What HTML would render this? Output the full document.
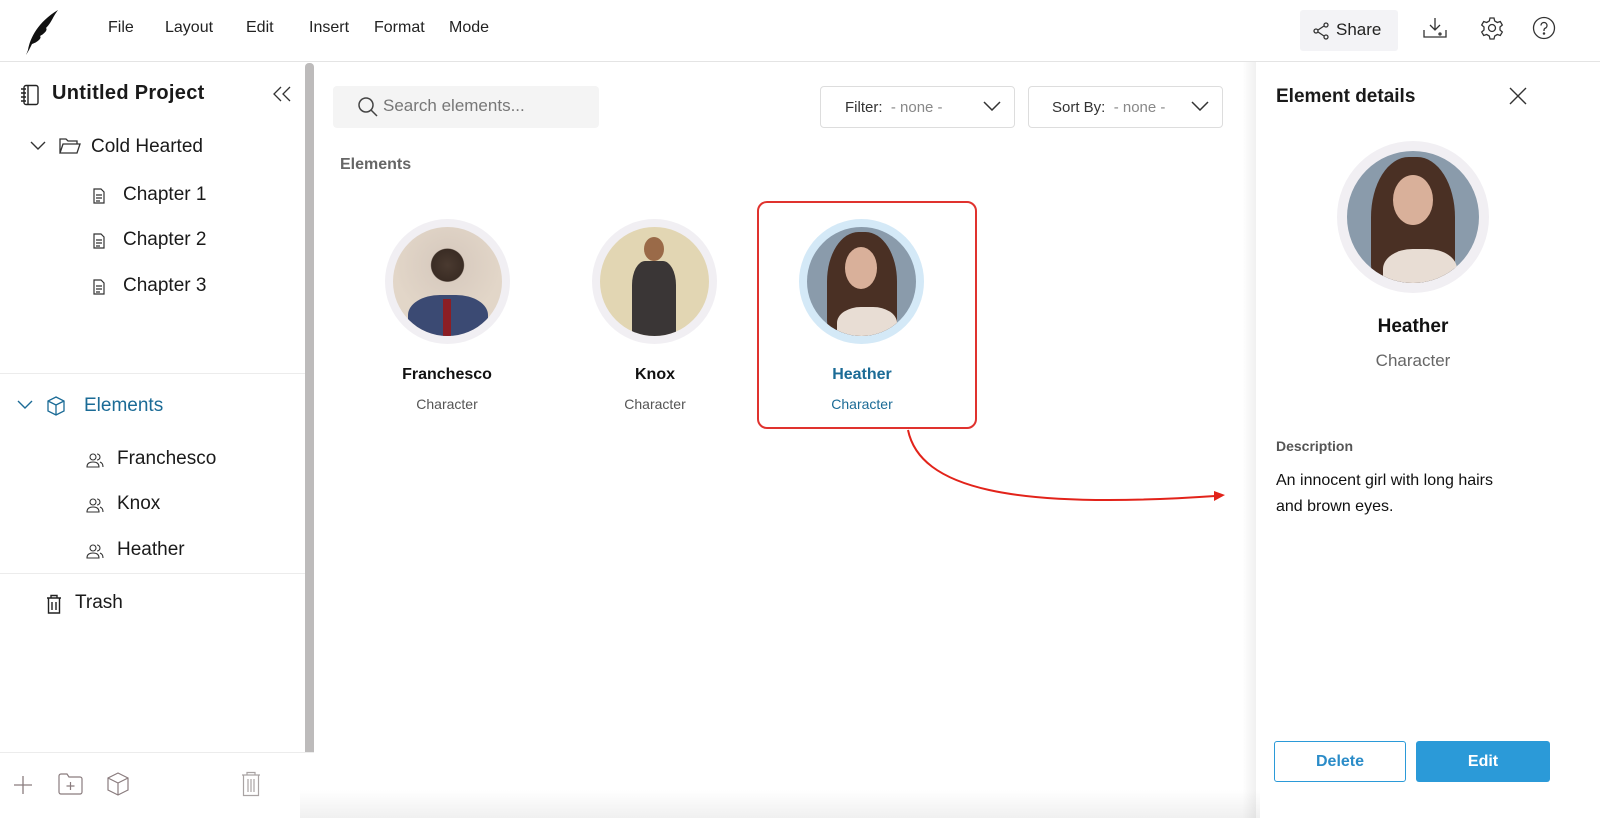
<!DOCTYPE html>
<html><head><meta charset="utf-8"><style>
*{box-sizing:border-box;margin:0;padding:0}
body{width:1600px;height:818px;overflow:hidden;background:#fff;font-family:"Liberation Sans",sans-serif;color:#111;position:relative}
.abs{position:absolute}
.menu span{position:absolute;top:19px;font-size:16px;color:#222}
.side{font-size:19px;color:#1a1a1a}
svg{position:absolute}
.name{position:absolute;width:200px;text-align:center;font-weight:bold;font-size:16px}
.type{position:absolute;width:200px;text-align:center;font-size:14px;color:#555}
</style></head><body>
<!-- header -->
<svg style="left:22px;top:8px" width="40" height="48" viewBox="0 0 40 48"><path d="M4 47 L6 42 C8 30 16 14 36 2 C30 10 30 14 24 20 C26 22 22 26 18 28 C20 30 16 34 10 36 L7 42 Z" fill="#111"/></svg>
<div class="menu"><span style="left:108px">File</span><span style="left:165px">Layout</span><span style="left:246px">Edit</span><span style="left:309px">Insert</span><span style="left:374px">Format</span><span style="left:449px">Mode</span></div>
<div class="abs" style="left:1300px;top:10px;width:98px;height:41px;background:#f3f3f6;border-radius:3px"></div>
<svg style="left:1313px;top:22px" width="18" height="18" viewBox="0 0 18 18" fill="none" stroke="#333" stroke-width="1.3"><circle cx="3" cy="9" r="2"/><circle cx="13" cy="3" r="2"/><circle cx="13" cy="15" r="2"/><path d="M5 8L11 4M5 10L11 14"/></svg>
<div class="abs" style="left:1336px;top:20px;font-size:17px;color:#222">Share</div>
<svg style="left:1422px;top:16px" width="26" height="24" viewBox="0 0 26 24" fill="none" stroke="#333" stroke-width="1.3"><path d="M13 2V14M8 9L13 14L18 9M2 14V21H24V14"/><circle cx="18" cy="18" r="1"/></svg>
<svg style="left:1480px;top:16px" width="24" height="24" viewBox="0 0 24 24" fill="none" stroke="#333" stroke-width="1.3"><circle cx="12" cy="12" r="3.5"/><path d="M10 2h4l.7 3 2.6 1.5 3-1 2 3.5-2.3 2v3l2.3 2-2 3.5-3-1-2.6 1.5-.7 3h-4l-.7-3-2.6-1.5-3 1-2-3.5 2.3-2v-3l-2.3-2 2-3.5 3 1L9.3 5z"/></svg>
<svg style="left:1532px;top:16px" width="24" height="24" viewBox="0 0 24 24" fill="none" stroke="#333" stroke-width="1.3"><circle cx="12" cy="12" r="10.5"/><path d="M9 9.5a3 3 0 1 1 4 2.8c-.8.4-1 1-1 2v.7"/><circle cx="12" cy="17.5" r=".6" fill="#333"/></svg>
<div class="abs" style="left:0;top:61px;width:1600px;height:1px;background:#e4e4e4"></div>

<!-- sidebar -->
<div class="abs" style="left:305px;top:63px;width:9px;height:690px;background:#bdbbbb;border-radius:4px 4px 0 0"></div>
<svg style="left:19px;top:84px" width="22" height="22" viewBox="0 0 22 22" fill="none" stroke="#222" stroke-width="1.4"><rect x="5" y="1.5" width="14" height="19" rx="2"/><path d="M9 1.5V20.5M2 5h5M2 9h5M2 13h5M2 17h5"/></svg>
<div class="abs side" style="left:52px;top:82px;font-weight:bold;font-size:20px;letter-spacing:.3px">Untitled Project</div>
<svg style="left:272px;top:86px" width="20" height="16" viewBox="0 0 20 16" fill="none" stroke="#333" stroke-width="1.3"><path d="M9 1L2 8L9 15M18 1L11 8L18 15"/></svg>
<svg style="left:30px;top:141px" width="16" height="10" viewBox="0 0 16 10" fill="none" stroke="#333" stroke-width="1.4"><path d="M1 1L8 8L15 1"/></svg>
<svg style="left:59px;top:137px" width="22" height="18" viewBox="0 0 22 18" fill="none" stroke="#333" stroke-width="1.3"><path d="M1 16V2h6l2 2h9v3M1 16L4 7h17l-3 9z"/></svg>
<div class="abs side" style="left:91px;top:136px">Cold Hearted</div>
<svg style="left:93px;top:188px" width="12" height="16" viewBox="0 0 12 16" fill="none" stroke="#333" stroke-width="1.2"><path d="M1 1h7l3 3v11H1zM3 7h6M3 10h6M3 13h4"/></svg>
<div class="abs side" style="left:123px;top:184px">Chapter 1</div>
<svg style="left:93px;top:233px" width="12" height="16" viewBox="0 0 12 16" fill="none" stroke="#333" stroke-width="1.2"><path d="M1 1h7l3 3v11H1zM3 7h6M3 10h6M3 13h4"/></svg>
<div class="abs side" style="left:123px;top:229px">Chapter 2</div>
<svg style="left:93px;top:279px" width="12" height="16" viewBox="0 0 12 16" fill="none" stroke="#333" stroke-width="1.2"><path d="M1 1h7l3 3v11H1zM3 7h6M3 10h6M3 13h4"/></svg>
<div class="abs side" style="left:123px;top:275px">Chapter 3</div>
<div class="abs" style="left:0;top:373px;width:305px;height:1px;background:#ececec"></div>
<svg style="left:17px;top:400px" width="16" height="10" viewBox="0 0 16 10" fill="none" stroke="#1b6b96" stroke-width="1.4"><path d="M1 1L8 8L15 1"/></svg>
<svg style="left:46px;top:396px" width="20" height="20" viewBox="0 0 20 20" fill="none" stroke="#1b6b96" stroke-width="1.3"><path d="M10 1L18 5V15L10 19L2 15V5zM2 5L10 9L18 5M10 9V19"/></svg>
<div class="abs side" style="left:84px;top:395px;color:#1b6b96">Elements</div>
<svg style="left:86px;top:452px" width="18" height="16" viewBox="0 0 18 16" fill="none" stroke="#333" stroke-width="1.1"><circle cx="7" cy="5" r="3"/><path d="M1 15c0-4 3-5 6-5s6 1 6 5zM11 2a3 3 0 0 1 0 6M14 10c2 1 3 2 3 5"/></svg>
<div class="abs side" style="left:117px;top:448px">Franchesco</div>
<svg style="left:86px;top:497px" width="18" height="16" viewBox="0 0 18 16" fill="none" stroke="#333" stroke-width="1.1"><circle cx="7" cy="5" r="3"/><path d="M1 15c0-4 3-5 6-5s6 1 6 5zM11 2a3 3 0 0 1 0 6M14 10c2 1 3 2 3 5"/></svg>
<div class="abs side" style="left:117px;top:493px">Knox</div>
<svg style="left:86px;top:543px" width="18" height="16" viewBox="0 0 18 16" fill="none" stroke="#333" stroke-width="1.1"><circle cx="7" cy="5" r="3"/><path d="M1 15c0-4 3-5 6-5s6 1 6 5zM11 2a3 3 0 0 1 0 6M14 10c2 1 3 2 3 5"/></svg>
<div class="abs side" style="left:117px;top:539px">Heather</div>
<div class="abs" style="left:0;top:573px;width:305px;height:1px;background:#ececec"></div>
<svg style="left:46px;top:594px" width="16" height="20" viewBox="0 0 16 20" fill="none" stroke="#222" stroke-width="1.4"><path d="M1 4h14M5 4V1.5h6V4M2.5 4V19h11V4M6 8v8M10 8v8"/></svg>
<div class="abs side" style="left:75px;top:592px">Trash</div>
<div class="abs" style="left:0;top:752px;width:314px;height:1px;background:#ececec"></div>
<svg style="left:12px;top:774px" width="22" height="22" viewBox="0 0 22 22" fill="none" stroke="#8a7c7e" stroke-width="1.3"><path d="M11 2V20M2 11H20"/></svg>
<svg style="left:58px;top:773px" width="25" height="22" viewBox="0 0 25 22" fill="none" stroke="#8a7c7e" stroke-width="1.2"><path d="M1 3a2 2 0 0 1 2-2h6l2 3h11a2 2 0 0 1 2 2v13a2 2 0 0 1-2 2H3a2 2 0 0 1-2-2zM12.5 9v8M8.5 13h8"/></svg>
<svg style="left:106px;top:772px" width="24" height="24" viewBox="0 0 24 24" fill="none" stroke="#8a7c7e" stroke-width="1.2"><path d="M12 1L22 6V18L12 23L2 18V6zM2 6L12 11L22 6M12 11V23"/></svg>
<svg style="left:241px;top:771px" width="20" height="26" viewBox="0 0 20 26" fill="none" stroke="#a9a3a3" stroke-width="1.2"><path d="M1 4h18M6 4V1.5h8V4M2.5 4V24.5h15V4M7 8v13M10 8v13M13 8v13"/></svg>
<div class="abs" style="left:300px;top:790px;width:960px;height:28px;background:linear-gradient(#fff,#f0f0f0)"></div>

<!-- main -->
<div class="abs" style="left:333px;top:86px;width:266px;height:42px;background:#f4f4f4;border-radius:4px"></div>
<svg style="left:357px;top:96px" width="22" height="22" viewBox="0 0 22 22" fill="none" stroke="#444" stroke-width="1.5"><circle cx="9" cy="9" r="7"/><path d="M14 14L20 20"/></svg>
<div class="abs" style="left:383px;top:96px;font-size:17px;color:#777">Search elements...</div>
<div class="abs" style="left:820px;top:86px;width:195px;height:42px;border:1px solid #ddd;border-radius:4px"></div>
<div class="abs" style="left:845px;top:99px;font-size:15px;color:#333">Filter:&nbsp; <span style="color:#888">- none -</span></div>
<svg style="left:983px;top:101px" width="18" height="10" viewBox="0 0 18 10" fill="none" stroke="#333" stroke-width="1.5"><path d="M1 1L9 9L17 1"/></svg>
<div class="abs" style="left:1028px;top:86px;width:195px;height:42px;border:1px solid #ddd;border-radius:4px"></div>
<div class="abs" style="left:1052px;top:99px;font-size:15px;color:#333">Sort By:&nbsp; <span style="color:#888">- none -</span></div>
<svg style="left:1191px;top:101px" width="18" height="10" viewBox="0 0 18 10" fill="none" stroke="#333" stroke-width="1.5"><path d="M1 1L9 9L17 1"/></svg>
<div class="abs" style="left:340px;top:156px;font-size:16px;font-weight:bold;color:#666">Elements</div>

<div class="abs" style="left:385px;top:219px;width:125px;height:125px;border-radius:50%;background:#f1eff3"></div>
<div class="abs" style="left:393px;top:227px;width:109px;height:109px;border-radius:50%;background:radial-gradient(circle at 50% 35%,#4a3a30 0,#3a2c24 18%,#d9ccc0 19%,#e2d6c8 60%);overflow:hidden"><div style="position:absolute;left:15px;top:68px;width:80px;height:50px;background:#3b4a73;border-radius:40% 40% 0 0"></div><div style="position:absolute;left:50px;top:72px;width:8px;height:40px;background:#8c1e24"></div></div>
<div class="name" style="left:347px;top:366px">Franchesco</div>
<div class="type" style="left:347px;top:396px">Character</div>

<div class="abs" style="left:592px;top:219px;width:125px;height:125px;border-radius:50%;background:#f1eff3"></div>
<div class="abs" style="left:600px;top:227px;width:109px;height:109px;border-radius:50%;background:#e2d6b3;overflow:hidden"><div style="position:absolute;left:44px;top:10px;width:20px;height:24px;background:#9a6a48;border-radius:50%"></div><div style="position:absolute;left:32px;top:34px;width:44px;height:80px;background:#3a3636;border-radius:30% 30% 0 0"></div></div>
<div class="name" style="left:555px;top:366px">Knox</div>
<div class="type" style="left:555px;top:396px">Character</div>

<div class="abs" style="left:757px;top:201px;width:220px;height:228px;border:2px solid #e0322e;border-radius:10px"></div>
<div class="abs" style="left:799px;top:219px;width:125px;height:125px;border-radius:50%;background:#d4e9f7"></div>
<div class="abs" style="left:807px;top:227px;width:109px;height:109px;border-radius:50%;background:#8a9bab;overflow:hidden"><div style="position:absolute;left:20px;top:5px;width:70px;height:110px;background:#4a3024;border-radius:45% 45% 20% 20%"></div><div style="position:absolute;left:38px;top:20px;width:32px;height:42px;background:#d9b09a;border-radius:50%"></div><div style="position:absolute;left:30px;top:80px;width:60px;height:40px;background:#e8ddd4;border-radius:40% 40% 0 0"></div></div>
<div class="name" style="left:762px;top:366px;color:#1b6b96">Heather</div>
<div class="type" style="left:762px;top:396px;color:#1b6b96">Character</div>

<svg style="left:900px;top:428px" width="330" height="85" viewBox="0 0 330 85" fill="none"><path d="M8 2C20 60 110 82 315 68" stroke="#e2231a" stroke-width="2"/><path d="M314 63L325 67L314 73Z" fill="#e2231a"/></svg>

<!-- right panel -->
<div class="abs" style="left:1242px;top:62px;width:14px;height:756px;background:linear-gradient(90deg,rgba(0,0,0,0),rgba(0,0,0,.06))"></div>
<div class="abs" style="left:1276px;top:86px;font-size:19px;font-weight:bold;color:#1a1a1a">Element details</div>
<svg style="left:1508px;top:86px" width="20" height="20" viewBox="0 0 20 20" fill="none" stroke="#333" stroke-width="1.4"><path d="M2 2L18 18M18 2L2 18"/></svg>
<div class="abs" style="left:1337px;top:141px;width:152px;height:152px;border-radius:50%;background:#f1eff3"></div>
<div class="abs" style="left:1347px;top:151px;width:132px;height:132px;border-radius:50%;background:#8a9bab;overflow:hidden"><div style="position:absolute;left:24px;top:6px;width:84px;height:134px;background:#4a3024;border-radius:45% 45% 20% 20%"></div><div style="position:absolute;left:46px;top:24px;width:40px;height:50px;background:#d9b09a;border-radius:50%"></div><div style="position:absolute;left:36px;top:98px;width:74px;height:50px;background:#e8ddd4;border-radius:40% 40% 0 0"></div></div>
<div class="abs" style="left:1313px;top:316px;width:200px;text-align:center;font-size:19px;font-weight:bold">Heather</div>
<div class="abs" style="left:1313px;top:351px;width:200px;text-align:center;font-size:17px;color:#666">Character</div>
<div class="abs" style="left:1276px;top:438px;font-size:14px;font-weight:bold;color:#555">Description</div>
<div class="abs" style="left:1276px;top:468px;font-size:16px;line-height:26px;color:#111">An innocent girl with long hairs<br>and brown eyes.</div>
<div class="abs" style="left:1274px;top:741px;width:132px;height:41px;border:1px solid #2b9ad8;border-radius:3px;color:#2b8cc8;font-weight:bold;font-size:16px;text-align:center;line-height:39px">Delete</div>
<div class="abs" style="left:1416px;top:741px;width:134px;height:41px;background:#2b9ad8;border-radius:3px;color:#fff;font-weight:bold;font-size:16px;text-align:center;line-height:41px">Edit</div>
</body></html>
